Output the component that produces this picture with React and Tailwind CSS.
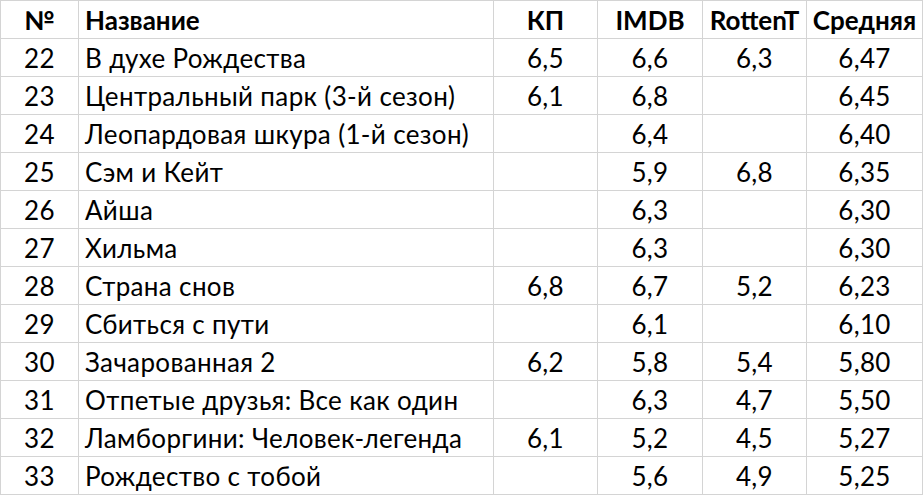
import React from "react";

const rows = [
  ["22", "В духе Рождества", "6,5", "6,6", "6,3", "6,47"],
  ["23", "Центральный парк (3-й сезон)", "6,1", "6,8", "", "6,45"],
  ["24", "Леопардовая шкура (1-й сезон)", "", "6,4", "", "6,40"],
  ["25", "Сэм и Кейт", "", "5,9", "6,8", "6,35"],
  ["26", "Айша", "", "6,3", "", "6,30"],
  ["27", "Хильма", "", "6,3", "", "6,30"],
  ["28", "Страна снов", "6,8", "6,7", "5,2", "6,23"],
  ["29", "Сбиться с пути", "", "6,1", "", "6,10"],
  ["30", "Зачарованная 2", "6,2", "5,8", "5,4", "5,80"],
  ["31", "Отпетые друзья: Все как один", "", "6,3", "4,7", "5,50"],
  ["32", "Ламборгини: Человек-легенда", "6,1", "5,2", "4,5", "5,27"],
  ["33", "Рождество с тобой", "", "5,6", "4,9", "5,25"],
];

const cols = "grid-cols-[78px_415px_104px_105px_104px_116px]";

const Cell = ({ children, left, bold }) => (
  <div
    className={`h-[38px] border-r border-b border-[#d4d4d4] flex items-end pb-[5px] leading-none ${
      left ? "justify-start pl-[6px]" : "justify-center"
    } ${bold ? "font-bold tracking-normal" : ""}`}
  >
    {children}
  </div>
);

export default function App() {
  return (
    <div
      className="w-[923px] h-[495px] bg-white overflow-hidden text-[26px] tracking-[0.35px] text-black"
      style={{ fontFamily: "Lato, 'Noto Sans', sans-serif" }}
    >
      <div className={`grid ${cols} border-l border-t border-[#d4d4d4] w-max`}>
        <Cell bold>№</Cell>
        <Cell bold left>Название</Cell>
        <Cell bold>КП</Cell>
        <Cell bold>IMDB</Cell>
        <Cell bold>RottenT</Cell>
        <Cell bold>Средняя</Cell>
        {rows.map((r) => (
          <React.Fragment key={r[0]}>
            <Cell>{r[0]}</Cell>
            <Cell left>{r[1]}</Cell>
            <Cell>{r[2]}</Cell>
            <Cell>{r[3]}</Cell>
            <Cell>{r[4]}</Cell>
            <Cell>{r[5]}</Cell>
          </React.Fragment>
        ))}
      </div>
    </div>
  );
}
